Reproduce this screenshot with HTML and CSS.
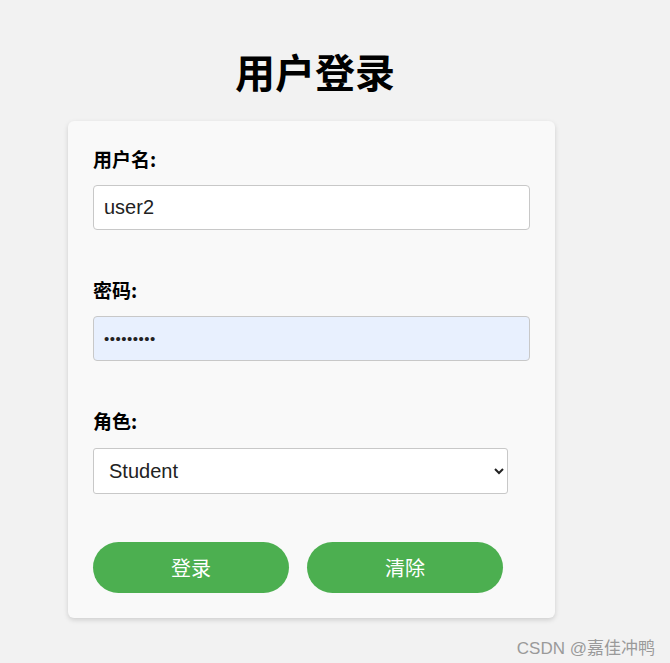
FILE: index.html
```html
<!DOCTYPE html>
<html lang="zh-CN">
<head>
    <meta charset="UTF-8">
    <meta name="viewport" content="width=device-width, initial-scale=1.0">
    <title>用户登录</title>
    <link rel="stylesheet" href="styles.css">
</head>
<body>

    <div class="wrapper">
        <!-- Title -->
        <h1 class="title">用户登录</h1>

        <!-- Login Card -->
        <div class="login-card">
            <form class="login-form">
                <div class="form-group">
                    <label for="username">用户名:</label>
                    <input type="text" id="username" value="user2">
                </div>
                <div class="form-group">
                    <label for="password">密码:</label>
                    <input type="password" id="password" class="autofilled" value="password1">
                </div>
                <div class="form-group last">
                    <label for="role">角色:</label>
                    <select id="role">
                        <option>Student</option>
                        <option>Teacher</option>
                        <option>Admin</option>
                    </select>
                </div>
                <div class="button-row">
                    <button type="submit" class="green-button">登录</button>
                    <button type="reset" class="green-button">清除</button>
                </div>
            </form>
        </div>
    </div>

    <!-- Watermark -->
    <div class="footer">CSDN @嘉佳冲鸭</div>

</body>
</html>
```

FILE: styles.css
```css
body { margin: 0; font-family: "Noto Sans CJK SC", "Liberation Sans", sans-serif; background-color: #f2f2f2; color: #000; }
.wrapper { width: 487px; margin-left: 68px; padding-top: 46px; }
.title { margin: 0 0 25px 0; padding-left: 7px; text-align: center; font-size: 40px; line-height: 50px; font-weight: 700; }
.login-card { background-color: #f9f9f9; padding: 25px; border-radius: 6px; box-shadow: 0 2px 5px rgba(0,0,0,0.15); }
.form-group { margin-bottom: 47px; }
.form-group.last { margin-bottom: 48px; }
.form-group label { display: block; font-size: 19px; font-weight: 700; line-height: 26px; margin-bottom: 13px; }
.form-group input { box-sizing: border-box; width: 100%; height: 45px; padding: 0 10px; font-family: "Liberation Sans", sans-serif; font-size: 20px; color: #222; background-color: #fff; border: 1px solid #c8c8c8; border-radius: 4px; }
.form-group input.autofilled { background-color: #e8f0fe; font-size: 15px; letter-spacing: 0.5px; }
.form-group select { box-sizing: border-box; width: 95%; height: 46px; margin-top: 1px; padding: 0 11px; font-family: "Liberation Sans", sans-serif; font-size: 20px; color: #222; background-color: #fff; border: 1px solid #c8c8c8; border-radius: 3px; }
.button-row { display: flex; gap: 18px; }
.green-button { width: 196px; height: 51px; background-color: #4caf50; color: #fff; font-family: "Noto Sans CJK SC", sans-serif; font-size: 20px; border: none; border-radius: 26px; cursor: pointer; }
.footer { text-align: right; padding: 16px 15px 0 0; font-family: "Liberation Sans", "Noto Sans CJK SC", sans-serif; font-size: 17px; color: #9a9a9a; }
```
